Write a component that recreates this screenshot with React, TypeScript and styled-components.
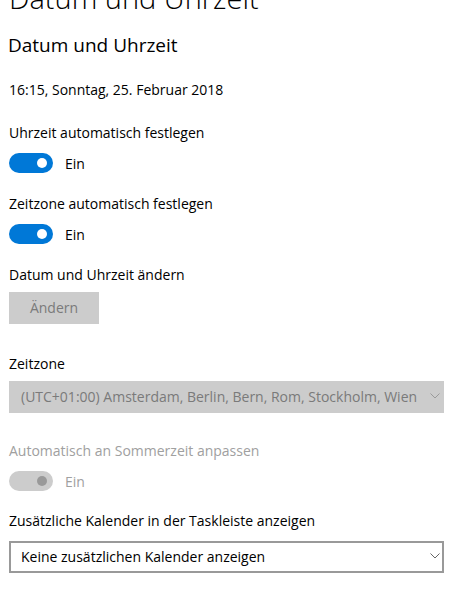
import React from 'react';
import styled, { createGlobalStyle } from 'styled-components';

const GlobalStyle = createGlobalStyle`
    html, body {
        margin: 0;
        padding: 0;
        background: #ffffff;
    }
    body {
        font-family: "Open Sans", "Noto Sans", sans-serif;
        color: #000000;
        overflow: hidden;
    }
`;

const Page = styled.div`
    width: 464px;
    height: 608px;
    overflow: hidden;
    padding-left: 9px;
    box-sizing: border-box;
`;

const PageTitle = styled.h1`
    margin: -21px 0 0 0;
    font-size: 29px;
    font-weight: 300;
    line-height: 38px;
    white-space: nowrap;
`;

const SectionTitle = styled.h2`
    margin: 15px 0 0 -1px;
    font-size: 19px;
    font-weight: 400;
    line-height: 26px;
`;

const Text = styled.div<{ $disabled?: boolean; $top: number }>`
    margin-top: ${(p) => p.$top}px;
    font-size: 14px;
    line-height: 20px;
    color: ${(p) => (p.$disabled ? '#a0a0a0' : '#000000')};
    white-space: nowrap;
`;

const ToggleRow = styled.div<{ $disabled?: boolean }>`
    display: flex;
    align-items: center;
    gap: 12px;
    margin-top: 10px;
    font-size: 14px;
    color: ${(p) => (p.$disabled ? '#a0a0a0' : '#000000')};
`;

const Track = styled.div<{ $disabled?: boolean }>`
    width: 44px;
    height: 20px;
    border-radius: 10px;
    background: ${(p) => (p.$disabled ? '#cccccc' : '#0078d7')};
    display: flex;
    align-items: center;
    justify-content: flex-end;
    padding-right: 6px;
    box-sizing: border-box;
`;

const Knob = styled.div<{ $disabled?: boolean }>`
    width: 10px;
    height: 10px;
    border-radius: 50%;
    background: ${(p) => (p.$disabled ? '#999999' : '#ffffff')};
`;

const Button = styled.button`
    display: block;
    margin-top: 7px;
    width: 90px;
    height: 32px;
    border: none;
    background: #cccccc;
    color: #7a7a7a;
    font-family: inherit;
    font-size: 14px;
    padding: 0 0 2px 0;
`;

const Select = styled.div<{ $disabled?: boolean; $top: number }>`
    margin-top: ${(p) => p.$top}px;
    width: 435px;
    height: 32px;
    box-sizing: border-box;
    display: flex;
    align-items: center;
    justify-content: space-between;
    padding: 0 2px 2px 10px;
    font-size: 14px;
    white-space: nowrap;
    background: ${(p) => (p.$disabled ? '#cccccc' : '#ffffff')};
    color: ${(p) => (p.$disabled ? '#7a7a7a' : '#000000')};
    border: 2px solid ${(p) => (p.$disabled ? '#cccccc' : '#999999')};
`;

const Chevron = ({ color }: { color: string }) => (
    <svg width="10" height="6" viewBox="0 0 10 6">
        <path d="M0.5 0.5 L5 5 L9.5 0.5" fill="none" stroke={color} strokeWidth="1" />
    </svg>
);

const Toggle = ({ disabled }: { disabled?: boolean }) => (
    <ToggleRow $disabled={disabled}>
        <Track $disabled={disabled}>
            <Knob $disabled={disabled} />
        </Track>
        <span>Ein</span>
    </ToggleRow>
);

export default function App() {
    return (
        <Page>
            <GlobalStyle />
            <PageTitle>Datum und Uhrzeit</PageTitle>
            <SectionTitle>Datum und Uhrzeit</SectionTitle>
            <Text $top={22}>16:15, Sonntag, 25. Februar 2018</Text>
            <Text $top={23}>Uhrzeit automatisch festlegen</Text>
            <Toggle />
            <Text $top={21}>Zeitzone automatisch festlegen</Text>
            <Toggle />
            <Text $top={21}>Datum und Uhrzeit ändern</Text>
            <Button>Ändern</Button>
            <Text $top={30}>Zeitzone</Text>
            <Select $disabled $top={7}>
                <span>(UTC+01:00) Amsterdam, Berlin, Bern, Rom, Stockholm, Wien</span>
                <Chevron color="#9a9a9a" />
            </Select>
            <Text $top={28} $disabled>Automatisch an Sommerzeit anpassen</Text>
            <Toggle disabled />
            <Text $top={20}>Zusätzliche Kalender in der Taskleiste anzeigen</Text>
            <Select $top={10}>
                <span>Keine zusätzlichen Kalender anzeigen</span>
                <Chevron color="#666666" />
            </Select>
        </Page>
    );
}
